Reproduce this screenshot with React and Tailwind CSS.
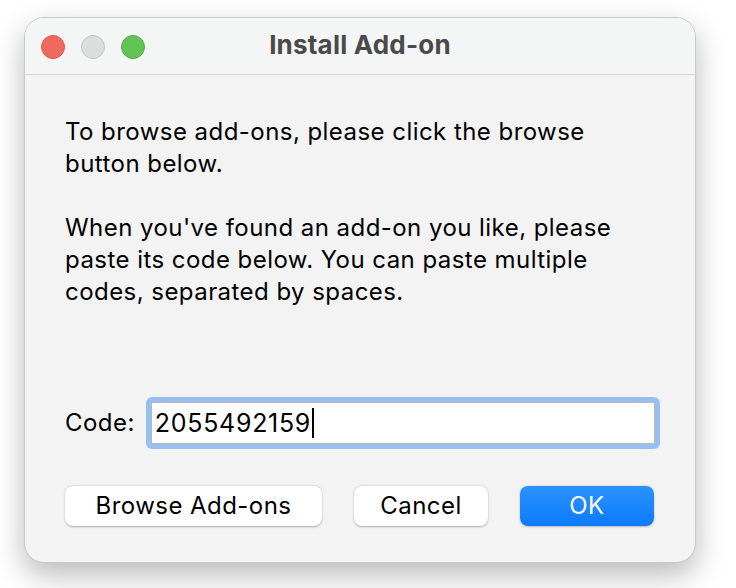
export default function App() {
  return (
    <div className="w-[736px] h-[588px] bg-white pt-[17px] pl-[24px]" style={{ fontFamily: "Inter, 'Liberation Sans', sans-serif" }}>
      <div className="w-[672px] h-[546px] rounded-[20px] border border-[#c9c9c9] bg-[#f3f3f3] shadow-[0_12px_30px_rgba(0,0,0,0.28)] overflow-hidden flex flex-col">
        <div className="h-[57px] flex items-center relative bg-[#f4f5f5] border-b border-[#d6d6d6]">
          <div className="flex gap-[16px] pl-[16px] pt-[1px]">
            <span className="w-[24px] h-[24px] rounded-full bg-[#ee6a5f] border border-[#d9584e]" />
            <span className="w-[24px] h-[24px] rounded-full bg-[#dcdddd] border border-[#c4c4c4]" />
            <span className="w-[24px] h-[24px] rounded-full bg-[#61c454] border border-[#4fae43]" />
          </div>
          <div className="absolute inset-0 flex items-center justify-center text-[26px] font-bold text-[#4a4a4a] tracking-[0.2px] pb-[3px]">
            Install Add-on
          </div>
        </div>
        <div className="flex-1 flex flex-col pl-[40px] pr-[35px] pt-[41px] text-[24px] tracking-[0.45px] text-black leading-[32px]">
          <p>To browse add-ons, please click the browse<br />button below.</p>
          <p className="mt-[32px]">When you've found an add-on you like, please<br />paste its code below. You can paste multiple<br />codes, separated by spaces.</p>
          <div className="flex items-center mt-[89px]">
            <span className="w-[81px]">Code:</span>
            <div className="w-[515px] h-[52px] rounded-[6px] bg-[#98bff2] p-[5px]">
              <div className="h-full bg-white border border-[#b8b8b8] flex items-center pl-[3px] text-[25px] tracking-[0.7px]">
                <span>2055492159</span>
                <span className="w-[2px] h-[30px] bg-black ml-[1px]" />
              </div>
            </div>
          </div>
          <div className="flex mt-[37px]">
            <button className="w-[257px] h-[40px] rounded-[8px] bg-white shadow-[0_0.5px_2px_rgba(0,0,0,0.3)] tracking-[0.45px]">Browse Add-ons</button>
            <button className="ml-[32px] w-[134px] h-[40px] rounded-[8px] bg-white shadow-[0_0.5px_2px_rgba(0,0,0,0.3)] tracking-[0.45px]">Cancel</button>
            <button className="ml-[32px] w-[134px] h-[40px] rounded-[8px] bg-gradient-to-b from-[#2a93ff] to-[#0a7aff] shadow-[0_0.5px_2px_rgba(0,0,0,0.25)] tracking-[0.45px] text-white">OK</button>
          </div>
        </div>
      </div>
    </div>
  );
}
